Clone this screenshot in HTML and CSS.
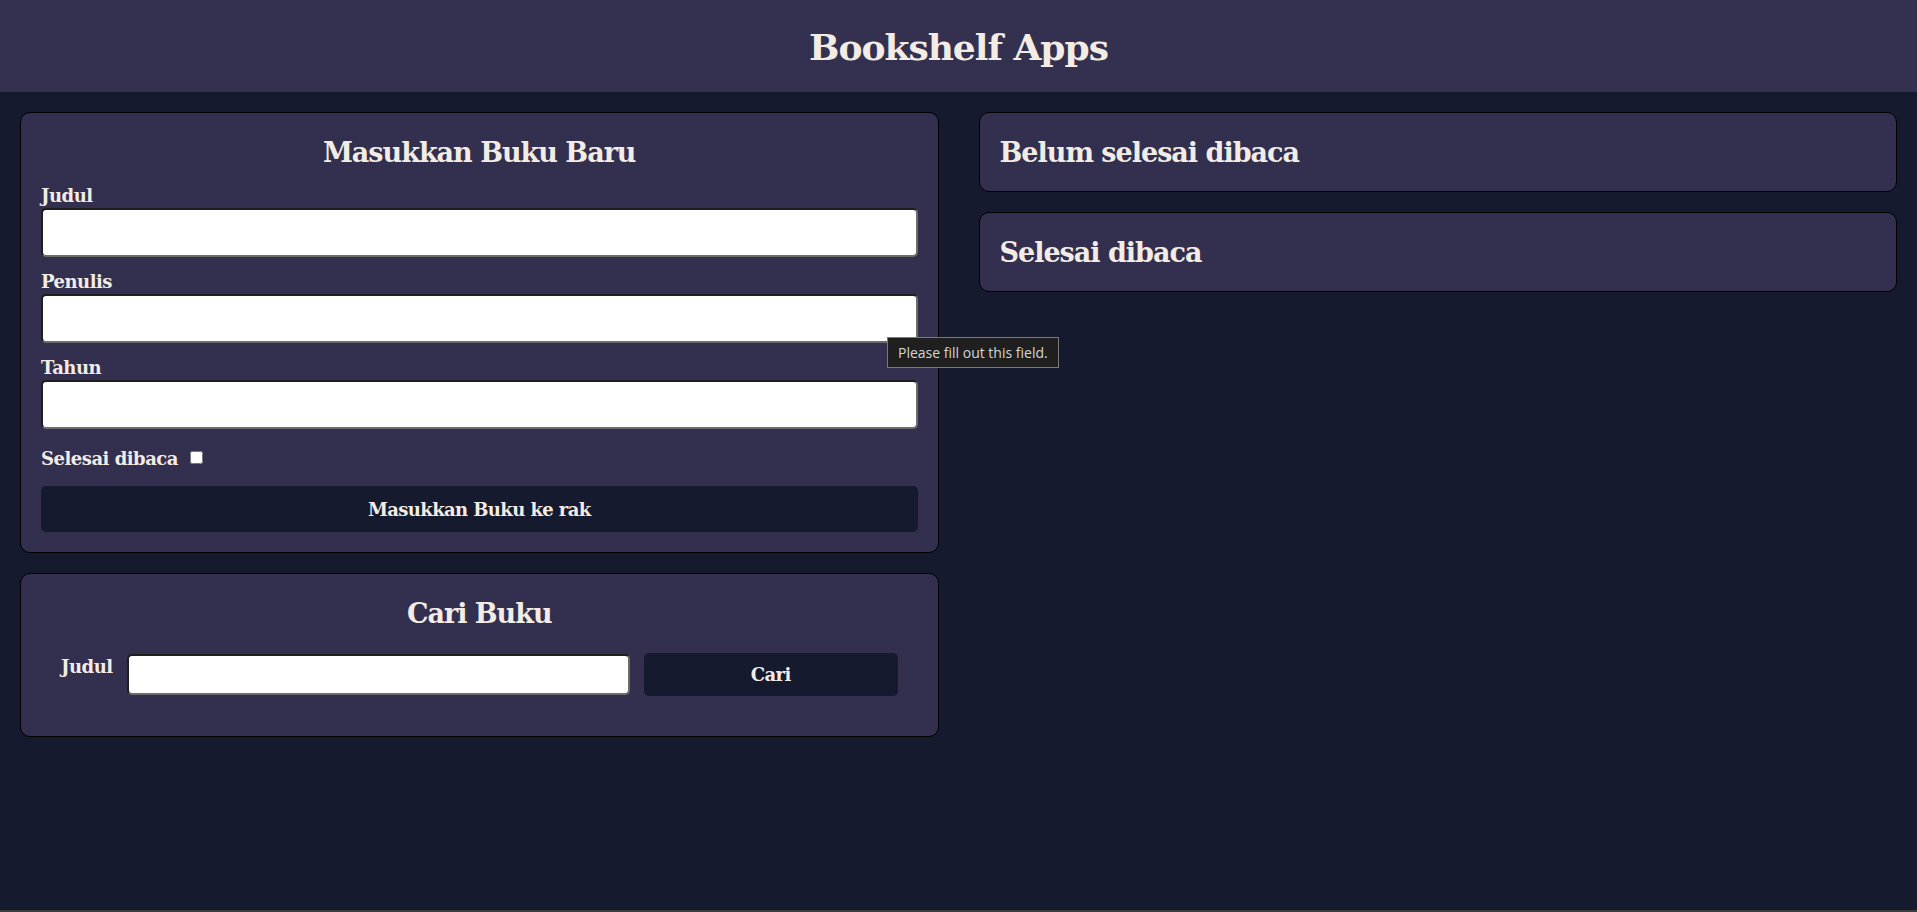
FILE: index.html
```html
<!DOCTYPE html>
<html lang="id">
<head>
<meta charset="utf-8">
<title>Bookshelf Apps</title>
<link rel="stylesheet" href="styles.css">
</head>
<body>
<header class="app-header">
  <h1 class="app-title">Bookshelf Apps</h1>
</header>
<main class="layout">
  <div class="column">
    <section class="card">
      <h2 class="card-title centered">Masukkan Buku Baru</h2>
      <form class="book-form">
        <div class="field">
          <label class="field-label" for="inputBookTitle">Judul</label>
          <input class="text-input tall" id="inputBookTitle" type="text">
        </div>
        <div class="field">
          <label class="field-label" for="inputBookAuthor">Penulis</label>
          <input class="text-input tall" id="inputBookAuthor" type="text">
        </div>
        <div class="field">
          <label class="field-label" for="inputBookYear">Tahun</label>
          <input class="text-input tall" id="inputBookYear" type="number">
        </div>
        <div class="check-row">
          <label class="check-label" for="inputBookIsComplete">Selesai dibaca</label>
          <input class="check" id="inputBookIsComplete" type="checkbox">
        </div>
        <button class="btn submit-btn" type="button">Masukkan Buku ke rak</button>
      </form>
    </section>
    <section class="card">
      <h2 class="card-title centered">Cari Buku</h2>
      <form class="search-form">
        <label class="search-label" for="searchBookTitle">Judul</label>
        <input class="text-input search-input" id="searchBookTitle" type="text">
        <button class="btn search-btn" type="button">Cari</button>
      </form>
    </section>
  </div>
  <div class="column">
    <section class="card">
      <h2 class="card-title">Belum selesai dibaca</h2>
    </section>
    <section class="card">
      <h2 class="card-title">Selesai dibaca</h2>
    </section>
  </div>
</main>
<div class="tooltip">Please fill out this field.</div>
<div class="window-edge"></div>
</body>
</html>
```
FILE: styles.css
```css
* { box-sizing: border-box; }

html, body {
  margin: 0;
  padding: 0;
}

body {
  position: relative;
  min-height: 100vh;
  background: #161a2f;
  color: #f2ece5;
  font-family: "Roboto Slab", "DejaVu Serif", serif;
}

.app-header {
  height: 92px;
  background: #33314f;
  display: flex;
  align-items: center;
  justify-content: center;
}

.app-title {
  margin: 0;
  font-size: 36px;
  letter-spacing: -1px;
  font-weight: 700;
  line-height: 1;
  padding-top: 2px;
}

.layout {
  display: grid;
  grid-template-columns: 1fr 1fr;
  gap: 40px;
  padding: 20px;
  align-items: start;
}

.column {
  display: flex;
  flex-direction: column;
  gap: 20px;
}

.card {
  background: #32304e;
  border: 1px solid #000;
  border-radius: 10px;
  padding: 20px;
}

.card-title {
  margin: 0;
  padding-top: 2px;
  font-size: 27px;
  letter-spacing: -1px;
  line-height: 36px;
  font-weight: 700;
}

.centered { text-align: center; }

.book-form {
  display: flex;
  flex-direction: column;
}

.field {
  display: flex;
  flex-direction: column;
  margin-top: 11px;
}

.field-label,
.check-label,
.search-label {
  font-size: 18px;
  line-height: 24px;
  font-weight: 600;
  letter-spacing: -0.5px;
}

.field-label {
  padding-top: 2px;
}

.text-input {
  display: block;
  width: 100%;
  background: #fff;
  border: 2px solid;
  border-color: #1e1e1e #6c6c6c #6c6c6c #1e1e1e;
  border-radius: 5px;
  font-size: 16px;
  padding: 4px 8px;
}

.tall { height: 49px; }

.check-row {
  display: flex;
  align-items: center;
  margin-top: 18px;
  height: 24px;
}

.check {
  width: 13px;
  height: 13px;
  margin: 0 0 3px 12px;
}

.btn {
  background: #161a2f;
  color: #f2ece5;
  border: none;
  border-radius: 5px;
  font-family: inherit;
  font-size: 18px;
  font-weight: 600;
  letter-spacing: -0.6px;
}

.submit-btn {
  margin-top: 15px;
  height: 46px;
  width: 100%;
}

.search-form {
  display: flex;
  align-items: flex-start;
  gap: 14px;
  padding: 21px 20px 20px;
}

.search-label {
  flex: none;
  padding-top: 2px;
}

.search-input {
  flex: 2 1 0;
  height: 41px;
  margin-top: 1px;
}

.search-btn {
  flex: 1 1 0;
  height: 43px;
}

.tooltip {
  position: absolute;
  left: 887px;
  top: 337px;
  width: 172px;
  height: 31px;
  background: #1f1f1f;
  border: 1px solid #7a7a7a;
  color: #d6d6d6;
  font-family: "Open Sans", "Noto Sans", sans-serif;
  font-size: 14px;
  line-height: 29px;
  padding-left: 10px;
  white-space: nowrap;
}

.window-edge {
  position: fixed;
  left: 0;
  right: 0;
  bottom: 0;
  height: 2px;
  background: #3d3d3d;
}
```
